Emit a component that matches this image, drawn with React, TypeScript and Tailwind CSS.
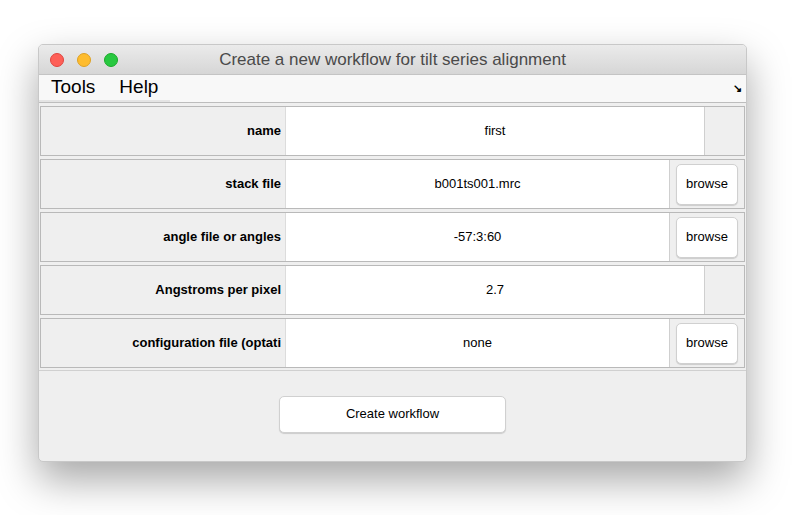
import React from "react";

const rows = [
  { label: "name", value: "first", browse: false },
  { label: "stack file", value: "b001ts001.mrc", browse: true },
  { label: "angle file or angles", value: "-57:3:60", browse: true },
  { label: "Angstroms per pixel", value: "2.7", browse: false },
  { label: "configuration file (optati", value: "none", browse: true },
];

export default function App() {
  return (
    <div className="w-[800px] h-[515px] bg-white pt-[44px] pl-[38px] font-[family-name:Liberation_Sans,Arial,sans-serif]">
      <div className="w-[709px] h-[418px] flex flex-col rounded-[5px] overflow-hidden border border-[#c8c8c8] bg-[#efefef] shadow-[0_18px_40px_rgba(0,0,0,0.35)]">
        <div className="h-[30px] flex items-center bg-gradient-to-b from-[#ebebeb] to-[#d6d6d6] border-b border-[#c4c4c4] relative">
          <div className="flex gap-[13px] pl-[11px]">
            <span className="w-[14px] h-[14px] rounded-full bg-[#fe5f57] border border-[#e0443e]" />
            <span className="w-[14px] h-[14px] rounded-full bg-[#febc2e] border border-[#dea123]" />
            <span className="w-[14px] h-[14px] rounded-full bg-[#28c840] border border-[#1aab29]" />
          </div>
          <div className="absolute inset-0 flex items-center justify-center text-[17px] text-[#4a4a4a] pl-[0px]">
            Create a new workflow for tilt series alignment
          </div>
        </div>
        <div className="h-[28px] flex items-center bg-[#f8f8f8] border-b border-[#bdbdbd]">
          <div className="flex h-full items-center border-b-2 border-[#e4e4e4] pr-[12px]">
            <span className="text-[19px] text-black pl-[12px] pr-[24px]">Tools</span>
            <span className="text-[19px] text-black">Help</span>
          </div>
          <div className="flex-1" />
          <span className="text-[11px] pr-[4px] font-bold text-black">↘</span>
        </div>
        <div className="flex flex-col gap-[3px] px-[1px] pt-[3px]">
          {rows.map((r) => (
            <div key={r.label} className="h-[50px] flex border border-[#b9b9b9] bg-[#efefef]">
              <div className="w-[245px] flex items-center justify-end pr-[4px] text-[13px] font-bold text-black border-r border-[#dcdcdc] whitespace-nowrap overflow-hidden">
                {r.label}
              </div>
              <div className="flex-1 bg-white flex items-center justify-center text-[13px] text-black border-r border-[#cfcfcf]">
                {r.value}
              </div>
              {r.browse ? (
                <div className="w-[74px] flex items-center justify-center">
                  <div className="w-[62px] h-[41px] bg-white rounded-[5px] border border-[#d0d0d0] shadow-[0_1px_1px_rgba(0,0,0,0.15)] flex items-center justify-center text-[13px]">
                    browse
                  </div>
                </div>
              ) : (
                <div className="w-[39px]" />
              )}
            </div>
          ))}
        </div>
        <div className="flex-1 flex items-center justify-center border-t border-[#d0d0d0] mt-[2px]">
          <div className="w-[227px] h-[37px] bg-white rounded-[5px] border border-[#d0d0d0] shadow-[0_1px_1px_rgba(0,0,0,0.15)] flex items-center justify-center text-[13px] mt-[-4px]">
            Create workflow
          </div>
        </div>
      </div>
    </div>
  );
}
